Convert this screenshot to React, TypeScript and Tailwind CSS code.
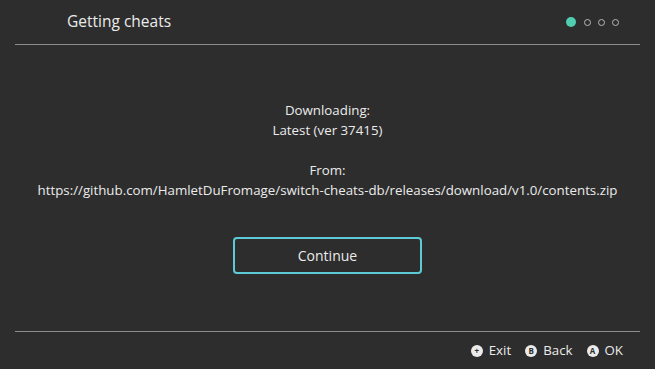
const font = { fontFamily: '"Open Sans", "Noto Sans", sans-serif' };

function ButtonGlyph({ label }: { label: string }) {
  return (
    <span className="flex h-[12px] w-[12px] items-center justify-center rounded-full bg-[#ebebeb] text-[8px] font-bold leading-none text-[#2d2d2d]">
      {label}
    </span>
  );
}

export default function App() {
  return (
    <div
      className="flex h-[369px] w-[655px] flex-col bg-[#2d2d2d] text-[#ebebeb]"
      style={font}
    >
      {/* Header */}
      <div className="mx-[15px] flex h-[45px] items-center justify-between border-b border-[#8c8c8c] pl-[52px] pr-[21px]">
        <h1 className="text-[15.5px]">Getting cheats</h1>
        <div className="flex items-center gap-[7px]">
          <span className="mr-[1px] h-[10px] w-[10px] rounded-full bg-[#4fcfb0]" />
          <span className="h-[7px] w-[7px] rounded-full border-[1.5px] border-[#b8b8b8]" />
          <span className="h-[7px] w-[7px] rounded-full border-[1.5px] border-[#b8b8b8]" />
          <span className="h-[7px] w-[7px] rounded-full border-[1.5px] border-[#b8b8b8]" />
        </div>
      </div>

      {/* Body */}
      <div className="mx-[15px] flex flex-1 flex-col items-center border-b border-[#8c8c8c] pt-[55px] text-[13.3px] leading-[20px]">
        <p>Downloading:</p>
        <p>Latest (ver 37415)</p>
        <p className="mt-[20px]">From:</p>
        <p>https://github.com/HamletDuFromage/switch-cheats-db/releases/download/v1.0/contents.zip</p>
        <button className="mt-[37px] flex h-[37px] w-[189px] items-center justify-center rounded-[4px] border-2 border-[#5ccbd6] text-[14px]">
          Continue
        </button>
      </div>

      {/* Footer */}
      <div className="flex h-[37px] items-center justify-end gap-[14px] pr-[32px] text-[13.3px]">
        <div className="flex items-center gap-[6px]">
          <ButtonGlyph label="+" />
          <span>Exit</span>
        </div>
        <div className="flex items-center gap-[6px]">
          <ButtonGlyph label="B" />
          <span>Back</span>
        </div>
        <div className="flex items-center gap-[6px]">
          <ButtonGlyph label="A" />
          <span>OK</span>
        </div>
      </div>
    </div>
  );
}
